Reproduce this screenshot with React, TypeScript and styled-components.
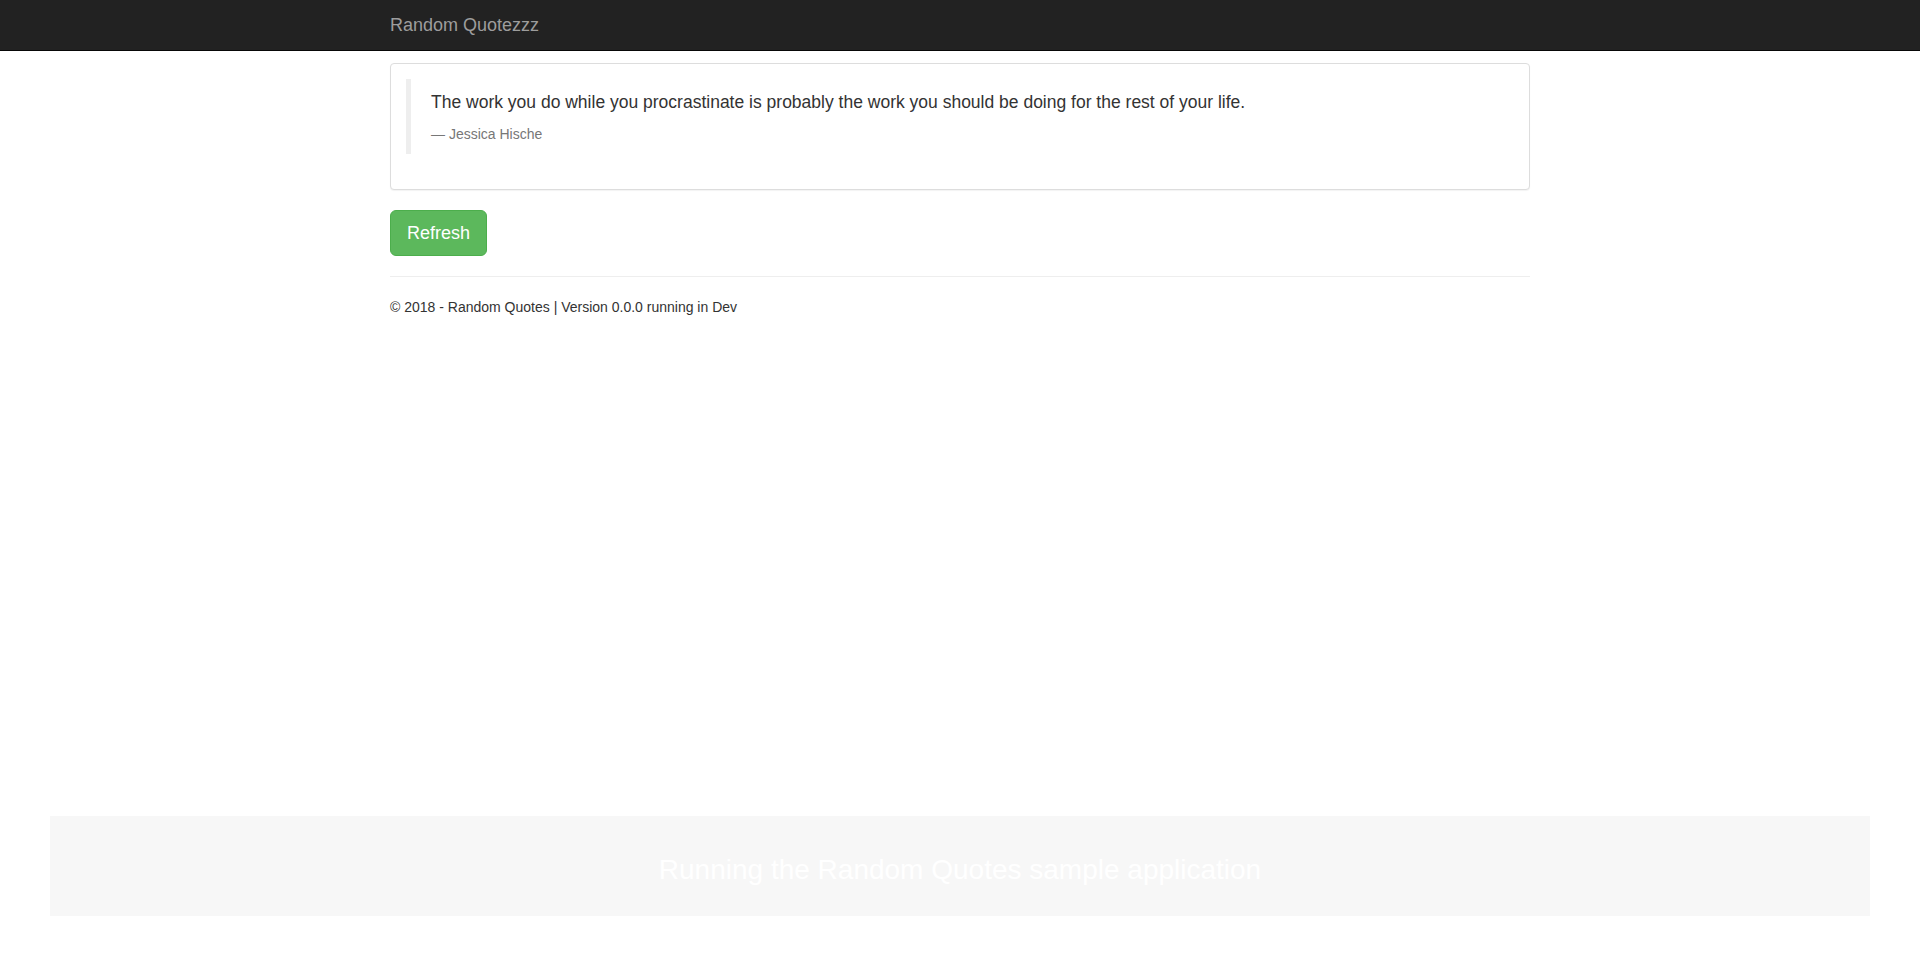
import React from "react";
import styled, { createGlobalStyle } from "styled-components";

const GlobalStyle = createGlobalStyle`
  *, *::before, *::after { box-sizing: border-box; }
  html, body { margin: 0; padding: 0; }
  body {
    font-family: "Liberation Sans", Arial, Helvetica, sans-serif;
    font-size: 14px;
    line-height: 1.42857143;
    color: #333;
    background: #fff;
  }
`;

const Page = styled.div`
  min-height: 100vh;
  display: flex;
  flex-direction: column;
`;

const Navbar = styled.nav`
  background: #222;
  border-bottom: 1px solid #080808;
  min-height: 51px;
`;

const Container = styled.div`
  width: 1170px;
  margin: 0 auto;
  padding: 0 15px;
`;

const Brand = styled.a`
  display: block;
  height: 50px;
  padding: 15px 0;
  font-size: 18px;
  line-height: 20px;
  color: #9d9d9d;
  text-decoration: none;
`;

const Main = styled(Container)`
  padding-top: 12px;
`;

const Panel = styled.div`
  border: 1px solid #ddd;
  border-radius: 4px;
  background: #fff;
  box-shadow: 0 1px 1px rgba(0, 0, 0, 0.05);
  margin-bottom: 20px;
`;

const PanelBody = styled.div`
  padding: 15px;
`;

const Blockquote = styled.blockquote`
  margin: 0 0 20px;
  padding: 10px 20px;
  border-left: 5px solid #eee;
  font-size: 17.5px;
`;

const QuoteText = styled.p`
  margin: 0 0 10px;
  padding-top: 1px;
  line-height: 24px;
  color: #333;
`;

const QuoteFooter = styled.footer`
  display: block;
  font-size: 14px;
  line-height: 20px;
  color: #777;
  &::before { content: "\\2014 \\00A0"; }
`;

const Button = styled.button`
  display: inline-block;
  padding: 10px 16px;
  font-family: inherit;
  font-size: 18px;
  line-height: 1.3333333;
  border-radius: 6px;
  color: #fff;
  background-color: #5cb85c;
  border: 1px solid #4cae4c;
  cursor: pointer;
  vertical-align: middle;
`;

const Rule = styled.hr`
  margin: 20px 0;
  border: 0;
  border-top: 1px solid #eee;
  height: 0;
`;

const FooterText = styled.p`
  margin: 0 0 10px;
`;

const Spacer = styled.div`
  flex: 1;
`;

const Banner = styled.div`
  margin: 0 50px 50px;
  height: 100px;
  padding-top: 7px;
  background: #f7f7f7;
  display: flex;
  align-items: center;
  justify-content: center;
  color: #fff;
  font-size: 28px;
`;

export default function App() {
  return (
    <>
      <GlobalStyle />
      <Page>
        <Navbar>
          <Container>
            <Brand href="#">Random Quotezzz</Brand>
          </Container>
        </Navbar>
        <Main>
          <Panel>
            <PanelBody>
              <Blockquote>
                <QuoteText>
                  The work you do while you procrastinate is probably the work you should be doing for the rest of your life.
                </QuoteText>
                <QuoteFooter>Jessica Hische</QuoteFooter>
              </Blockquote>
            </PanelBody>
          </Panel>
          <Button>Refresh</Button>
          <Rule />
          <footer>
            <FooterText>© 2018 - Random Quotes | Version 0.0.0 running in Dev</FooterText>
          </footer>
        </Main>
        <Spacer />
        <Banner>Running the Random Quotes sample application</Banner>
      </Page>
    </>
  );
}
